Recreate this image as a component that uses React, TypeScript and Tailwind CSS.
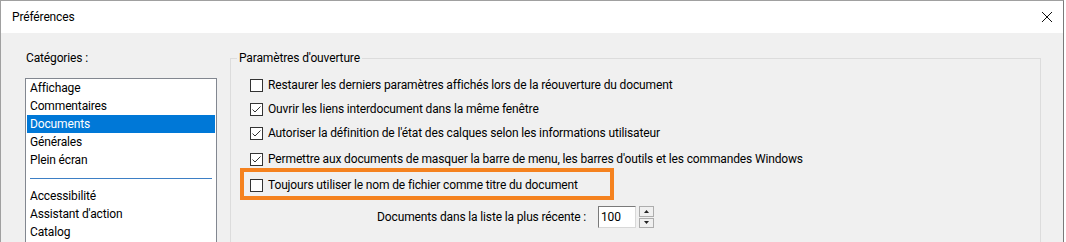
import { useState } from 'react'

const categories = ['Affichage', 'Commentaires', 'Documents', 'Générales', 'Plein écran']
const moreCategories = ['Accessibilité', "Assistant d'action", 'Catalog']

const options = [
  { label: 'Restaurer les derniers paramètres affichés lors de la réouverture du document', checked: false },
  { label: 'Ouvrir les liens interdocument dans la même fenêtre', checked: true },
  { label: "Autoriser la définition de l'état des calques selon les informations utilisateur", checked: true },
]

function CheckBox({ checked }: { checked: boolean }) {
  return (
    <span className="flex h-[13px] w-[13px] shrink-0 items-center justify-center border border-[#333333] bg-white">
      {checked && (
        <svg width="11" height="11" viewBox="0 0 11 11" fill="none">
          <path d="M1.5 5.5 L4 8 L9.5 2.5" stroke="#333333" strokeWidth="1" />
        </svg>
      )}
    </span>
  )
}

function OptionRow({ label, checked }: { label: string; checked: boolean }) {
  return (
    <label className="flex h-[24px] items-center gap-[5px]">
      <CheckBox checked={checked} />
      <span>{label}</span>
    </label>
  )
}

export default function App() {
  const [selected] = useState('Documents')

  return (
    <div
      className="h-[242px] w-[1066px] overflow-hidden bg-white text-[12px] leading-[16px] tracking-[-0.14px] text-black"
      style={{ fontFamily: 'Roboto, "Noto Sans", "Liberation Sans", sans-serif' }}
    >
      <div className="flex h-[243px] w-[1064px] flex-col border border-r-[#7a7a7a] border-l-[#a0a0a0] border-t-[#a0a0a0] border-b-transparent">
        {/* Title bar */}
        <div className="flex h-[32px] shrink-0 items-center justify-between bg-white pl-[11px] pr-[10px]">
          <span>Préférences</span>
          <svg width="12" height="12" viewBox="0 0 12 12">
            <path d="M1 1 L11 11 M11 1 L1 11" stroke="#111" strokeWidth="1" />
          </svg>
        </div>

        {/* Body */}
        <div className="flex flex-1 bg-[#f0f0f0] pt-[17px] pl-[24px]">
          {/* Categories */}
          <div className="flex w-[192px] shrink-0 flex-col">
            <div className="pl-[1px]">Catégories :</div>
            <div className="mt-[12px] flex-1 border border-[#828790] bg-white p-[1px] pt-0">
              {categories.map((c) => (
                <div
                  key={c}
                  className={
                    c === selected
                      ? 'h-[18px] bg-[#0078d7] pl-[3px] leading-[18px] text-white'
                      : 'h-[18px] pl-[3px] leading-[18px]'
                  }
                >
                  {c}
                </div>
              ))}
              <div className="flex h-[18px] items-center px-[3px]">
                <div className="h-px flex-1 bg-[#3d7fc5]" />
              </div>
              {moreCategories.map((c) => (
                <div key={c} className="h-[18px] pl-[3px] leading-[18px]">
                  {c}
                </div>
              ))}
            </div>
          </div>

          {/* Group box */}
          <fieldset className="ml-[13px] mr-[22px] flex-1 border border-[#dcdcdc] px-[6px] pt-[7px]">
            <legend className="px-[2px]">Paramètres d'ouverture</legend>
            <div className="ml-[13px]">
              {options.map((o) => (
                <OptionRow key={o.label} label={o.label} checked={o.checked} />
              ))}
              <div className="mt-[2px]">
                <OptionRow
                  label="Permettre aux documents de masquer la barre de menu, les barres d'outils et les commandes Windows"
                  checked
                />
              </div>
              <div className="relative mt-[2px]">
                <span className="absolute -top-[5px] -bottom-[3px] -left-[10px] w-[374px] border-4 border-[#f5821f]" />
                <OptionRow label="Toujours utiliser le nom de fichier comme titre du document" checked={false} />
              </div>
              <div className="mt-[9px] flex h-[22px] items-center">
                <span className="w-[337px] pr-[1px] text-right">Documents dans la liste la plus récente :</span>
                <div className="ml-[11px] flex h-[22px] w-[38px] items-center border border-[#7a7a7a] border-r-[#d8d8d8] border-b-[#d8d8d8] bg-white pl-[2px]">
                  100
                </div>
                <div className="ml-[3px] flex h-[22px] w-[15px] flex-col gap-px">
                  <div className="flex flex-1 items-center justify-center border border-[#adadad] bg-[#f0f0f0]">
                    <svg width="5" height="3" viewBox="0 0 5 3">
                      <path d="M0 3 L2.5 0 L5 3 Z" fill="#222" />
                    </svg>
                  </div>
                  <div className="flex flex-1 items-center justify-center border border-[#adadad] bg-[#f0f0f0]">
                    <svg width="5" height="3" viewBox="0 0 5 3">
                      <path d="M0 0 L2.5 3 L5 0 Z" fill="#222" />
                    </svg>
                  </div>
                </div>
              </div>
            </div>
          </fieldset>
        </div>
      </div>
    </div>
  )
}
